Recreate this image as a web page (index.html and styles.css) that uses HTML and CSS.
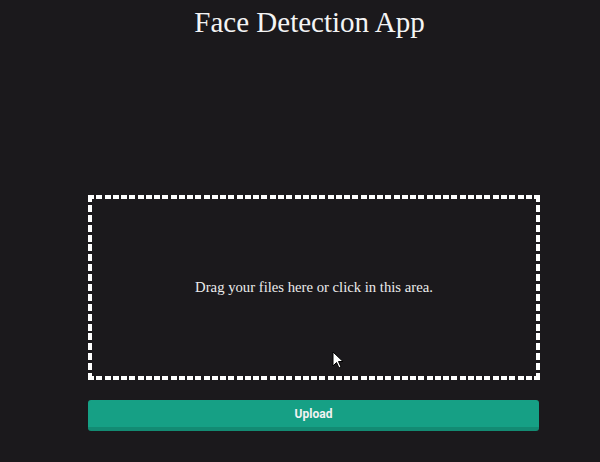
FILE: index.html
```html
<!DOCTYPE html>
<html>
<head>
<meta charset="utf-8">
<link rel="stylesheet" href="styles.css">
</head>
<body>
<div class="page">
  <h1 class="title">Face Detection App</h1>
  <form class="upload-form">
    <div class="dropzone">
      <p class="drop-text">Drag your files here or click in this area.</p>
    </div>
    <button type="button" class="upload-btn">Upload</button>
  </form>
</div>
<svg class="cursor" width="12" height="19" viewBox="0 0 12 19"><path d="M1 1 L1 15 L4.5 11.5 L7 17 L9 16 L6.5 10.5 L11 10.5 Z" fill="#fff" stroke="#000" stroke-width="1"/></svg>
</body>
</html>
```
FILE: styles.css
```css
html, body {
  margin: 0;
  padding: 0;
  background: #1b191c;
  height: 100%;
}
body {
  position: relative;
  font-family: "Liberation Serif", serif;
  color: #f2f2f2;
}
.page {
  width: 452px;
  margin-left: 88px;
  display: flex;
  flex-direction: column;
}
.title {
  margin: 4px 0 0 0;
  padding-right: 9px;
  text-align: center;
  font-family: "Liberation Serif", serif;
  font-weight: normal;
  font-size: 29px;
  line-height: 36px;
  color: #f4f4f4;
}
.upload-form {
  margin-top: 155px;
  display: flex;
  flex-direction: column;
  gap: 20px;
}
.dropzone {
  box-sizing: border-box;
  height: 185px;
  display: flex;
  align-items: center;
  justify-content: center;
  background:
    repeating-linear-gradient(90deg, #fff 0 6px, transparent 6px 8.26px) left top / 100% 4px no-repeat,
    repeating-linear-gradient(90deg, #fff 0 6px, transparent 6px 8.26px) left bottom / 100% 4px no-repeat,
    repeating-linear-gradient(180deg, #fff 0 7px, transparent 7px 9.89px) left top / 4px 100% no-repeat,
    repeating-linear-gradient(180deg, #fff 0 7px, transparent 7px 9.89px) right top / 4px 100% no-repeat;
}
.drop-text {
  margin: 0;
  font-family: "Liberation Serif", serif;
  font-size: 14.7px;
  color: #ececec;
}
.upload-btn {
  width: 451px;
  height: 31px;
  border: none;
  border-bottom: 4px solid #138b73;
  border-radius: 3px;
  background: #16a085;
  color: #f2f2f2;
  font-family: Roboto, "Liberation Sans", sans-serif;
  font-weight: bold;
  font-size: 12px;
  padding: 0;
}
.cursor {
  position: absolute;
  left: 332px;
  top: 351px;
}
```
